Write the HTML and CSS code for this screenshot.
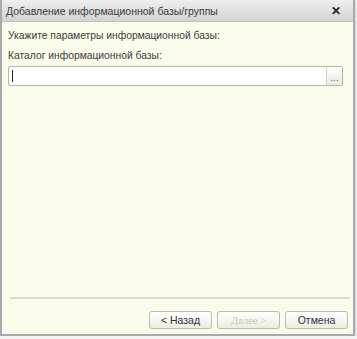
FILE: index.html
```html
<!DOCTYPE html>
<html lang="ru">
<head>
    <meta charset="UTF-8">
    <title>Добавление информационной базы/группы</title>
    <link rel="stylesheet" href="styles.css">
</head>
<body>
<div class="window">
    <div class="title-bar">
        <span class="title">Добавление информационной базы/группы</span>
        <span class="close">&#x2715;</span>
    </div>

    <div class="content">
        <div class="form">
            <p class="hint">Укажите параметры информационной базы:</p>
            <p class="label">Каталог информационной базы:</p>
            <div class="path-field">
                <div class="path-input"><span class="caret"></span></div>
                <button class="browse">...</button>
            </div>
        </div>

        <div class="footer">
            <button class="btn">&lt; Назад</button>
            <button class="btn btn-disabled" disabled>Далее &gt;</button>
            <button class="btn">Отмена</button>
        </div>
    </div>
</div>
</body>
</html>
```

FILE: styles.css
```css
body {
    margin: 0;
    background-color: #f4f4f4;
    font-family: "Liberation Sans", Arial, sans-serif;
    font-size: 10.3px;
    color: #3c3c3c;
}

.window {
    width: 351px;
    height: 334px;
    border: 2px solid #a9a9a9;
    border-top: none;
    background-color: #fbfbeb;
    display: flex;
    flex-direction: column;
    box-shadow: 1px 1px 2px rgba(0, 0, 0, 0.15);
}

.title-bar {
    height: 21px;
    background: linear-gradient(#efefef, #d2d2d2);
    display: flex;
    align-items: center;
    justify-content: space-between;
    padding: 0 12px 0 4px;
    border-bottom: 1px solid #c2c2c2;
}

.title {
    color: #3a3a3a;
    font-size: 10.5px;
}

.close {
    font-weight: bold;
    font-size: 12px;
    color: #222;
}

.content {
    flex: 1;
    display: flex;
    flex-direction: column;
    justify-content: space-between;
    padding: 0 2px 0 6px;
}

.form p {
    margin: 0;
}

.hint {
    padding-top: 8px;
}

.label {
    padding-top: 9px;
}

.path-field {
    display: flex;
    margin-top: 5px;
    margin-right: 8px;
    height: 18px;
    border: 1px solid #b5b5a8;
    border-radius: 2px;
    background-color: white;
}

.path-input {
    flex: 1;
    display: flex;
    align-items: center;
    padding-left: 3px;
}

.caret {
    width: 1px;
    height: 12px;
    background-color: #222;
}

.browse {
    width: 16px;
    padding: 4px 0 0;
    border: none;
    border-left: 1px solid #d0d0c4;
    background: linear-gradient(#ffffff, #ecece0);
    color: #555;
    font-size: 10px;
    line-height: 8px;
    font-family: inherit;
}

.footer {
    display: flex;
    justify-content: flex-end;
    gap: 5px;
    border-top: 2px solid #dcdccc;
    margin: 0 1px 0 2px;
    padding: 12px 2px 5px 0;
}

.btn {
    width: 63px;
    height: 18px;
    padding: 0;
    border: 1px solid #b9b9ad;
    border-radius: 3px;
    background: linear-gradient(#ffffff, #ecece2);
    font-family: inherit;
    font-size: 10.5px;
    color: #333;
}

.btn-disabled {
    color: #c8c8b4;
    font-family: "Liberation Serif", serif;
}
```
